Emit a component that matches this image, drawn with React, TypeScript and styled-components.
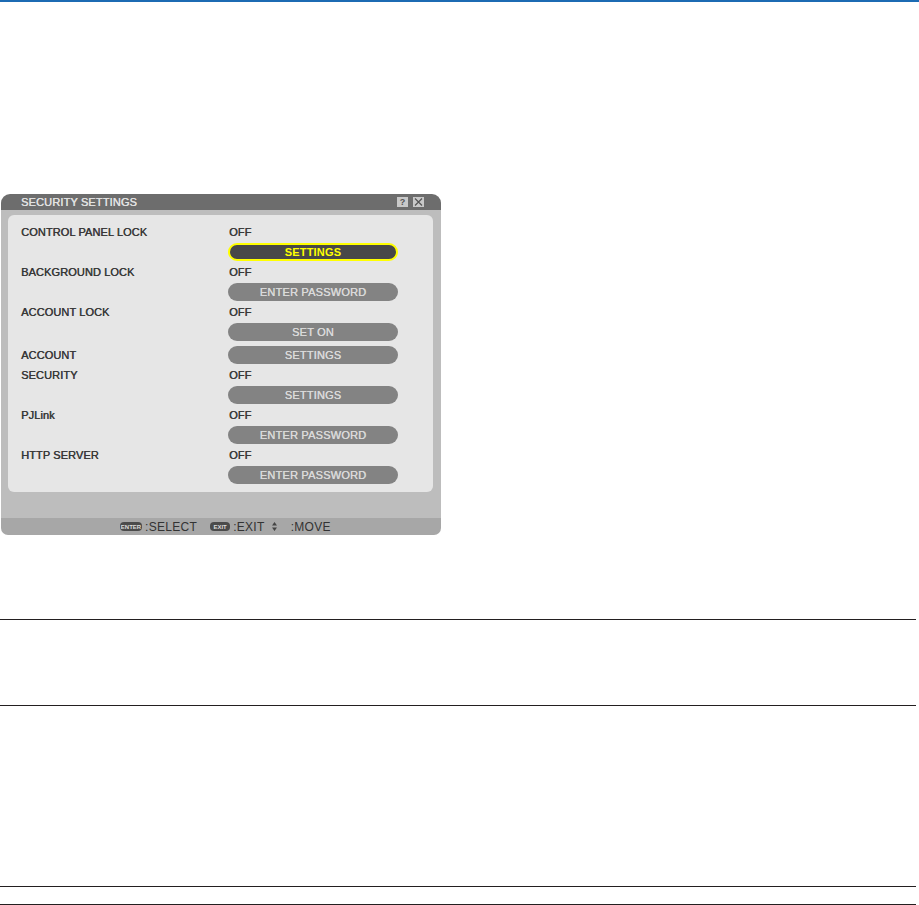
import React from 'react';
import styled, { createGlobalStyle } from 'styled-components';

const GlobalStyle = createGlobalStyle`
  html, body {
    margin: 0;
    padding: 0;
    background: #ffffff;
  }
  body {
    font-family: 'Liberation Sans', Arial, sans-serif;
  }
`;

const Page = styled.div`
  width: 919px;
  height: 905px;
  overflow: hidden;
  display: flex;
  flex-direction: column;
`;

const TopRule = styled.div`
  width: 100%;
  height: 2px;
  background-color: #1c6bb3;
`;

const Rule = styled.div<{ top: number }>`
  width: 916px;
  height: 1px;
  margin-top: ${p => p.top}px;
  background-color: #231f20;
`;

const Dialog = styled.div`
  width: 440px;
  margin: 192px 0 0 1px;
  display: flex;
  flex-direction: column;
`;

const TitleBar = styled.div`
  height: 16px;
  background-color: #6d6d6d;
  border-radius: 9px 9px 0 0;
  padding: 0 17px 0 20px;
  display: flex;
  justify-content: space-between;
  align-items: center;
`;

const Title = styled.div`
  color: #e2e2e2;
  font-size: 11px;
  letter-spacing: 0.15px;
  line-height: 16px;
  text-shadow: 0.3px 0 0 #e2e2e2;
`;

const TitleIcons = styled.div`
  display: flex;
  gap: 5px;
  align-items: center;
`;

const TitleIcon = styled.div`
  width: 11px;
  height: 10px;
  background-color: #c9c9c9;
  color: #555;
  font-size: 9px;
  font-weight: bold;
  line-height: 10px;
  text-align: center;
  display: flex;
  align-items: center;
  justify-content: center;
`;

const Body = styled.div`
  background-color: #bdbdbd;
  padding: 5px 8px 26px 7px;
`;

const Panel = styled.div`
  background-color: #e6e6e6;
  border-radius: 6px;
  padding: 7px 0 7px 13px;
`;

const Row = styled.div<{ gapTop?: number }>`
  height: 20px;
  margin-top: ${p => p.gapTop || 0}px;
  display: grid;
  grid-template-columns: 207px 170px;
  align-items: center;
`;

const Label = styled.div`
  color: #383838;
  font-size: 11px;
  letter-spacing: 0.1px;
  text-shadow: 0.4px 0 0 #383838;
`;

const Value = styled(Label)`
  padding-left: 1px;
`;

const MenuButton = styled.div<{ active?: boolean }>`
  grid-column: 2;
  height: 18px;
  box-sizing: border-box;
  border-radius: 9px;
  background-color: ${p => (p.active ? '#484848' : '#838383')};
  border: ${p => (p.active ? '2px solid #ffff00' : 'none')};
  color: ${p => (p.active ? '#ffff00' : '#dadada')};
  font-weight: ${p => (p.active ? 'bold' : 'normal')};
  text-shadow: ${p => (p.active ? 'none' : '0.3px 0 0 #dadada')};
  font-size: 11px;
  letter-spacing: 0.2px;
  display: flex;
  align-items: center;
  justify-content: center;
`;

const Footer = styled.div`
  height: 17px;
  background-color: #a7a7a7;
  border-radius: 0 0 7px 7px;
  display: flex;
  align-items: center;
  padding-left: 119px;
`;

const Hint = styled.div<{ gap: number; after: number }>`
  display: flex;
  align-items: center;
  gap: ${p => p.gap}px;
  margin-right: ${p => p.after}px;
`;

const KeyCap = styled.span<{ w: number }>`
  width: ${p => p.w}px;
  height: 9px;
  border-radius: 4px;
  background-color: #4b4b4b;
  color: #dcdcdc;
  font-size: 6px;
  font-weight: bold;
  display: flex;
  align-items: center;
  justify-content: center;
`;

const HintText = styled.span`
  color: #333;
  font-size: 12px;
  letter-spacing: 0.3px;
`;

interface IItem {
  label?: string;
  value?: string;
  button?: string;
  active?: boolean;
  gapTop?: number;
}

const items: IItem[] = [
  { label: 'CONTROL PANEL LOCK', value: 'OFF' },
  { button: 'SETTINGS', active: true },
  { label: 'BACKGROUND LOCK', value: 'OFF' },
  { button: 'ENTER PASSWORD' },
  { label: 'ACCOUNT LOCK', value: 'OFF' },
  { button: 'SET ON' },
  { label: 'ACCOUNT', button: 'SETTINGS', gapTop: 3 },
  { label: 'SECURITY', value: 'OFF' },
  { button: 'SETTINGS' },
  { label: 'PJLink', value: 'OFF' },
  { button: 'ENTER PASSWORD' },
  { label: 'HTTP SERVER', value: 'OFF' },
  { button: 'ENTER PASSWORD' },
];

const App: React.FC = () => {
  return (
    <Page>
      <GlobalStyle />
      <TopRule />
      <Dialog>
        <TitleBar>
          <Title>SECURITY SETTINGS</Title>
          <TitleIcons>
            <TitleIcon>?</TitleIcon>
            <TitleIcon>
              <svg width="9" height="8" viewBox="0 0 9 8">
                <path d="M1 0.5 L8 7.5 M8 0.5 L1 7.5" stroke="#555" strokeWidth="1.2" />
              </svg>
            </TitleIcon>
          </TitleIcons>
        </TitleBar>
        <Body>
          <Panel>
            {items.map((item, i) => (
              <Row key={i} gapTop={item.gapTop}>
                {item.label && <Label>{item.label}</Label>}
                {item.value && <Value>{item.value}</Value>}
                {item.button && <MenuButton active={item.active}>{item.button}</MenuButton>}
              </Row>
            ))}
          </Panel>
        </Body>
        <Footer>
          <Hint gap={3} after={13}>
            <KeyCap w={22}>ENTER</KeyCap>
            <HintText>:SELECT</HintText>
          </Hint>
          <Hint gap={3} after={7}>
            <KeyCap w={20}>EXIT</KeyCap>
            <HintText>:EXIT</HintText>
          </Hint>
          <Hint gap={14} after={0}>
            <svg width="5" height="9" viewBox="0 0 5 9">
              <path d="M2.5 0 L5 3.5 H0 Z M2.5 9 L0 5.5 H5 Z" fill="#444" />
            </svg>
            <HintText>:MOVE</HintText>
          </Hint>
        </Footer>
      </Dialog>
      <Rule top={84} />
      <Rule top={85} />
      <Rule top={180} />
      <Rule top={17} />
    </Page>
  );
};

export default App;
